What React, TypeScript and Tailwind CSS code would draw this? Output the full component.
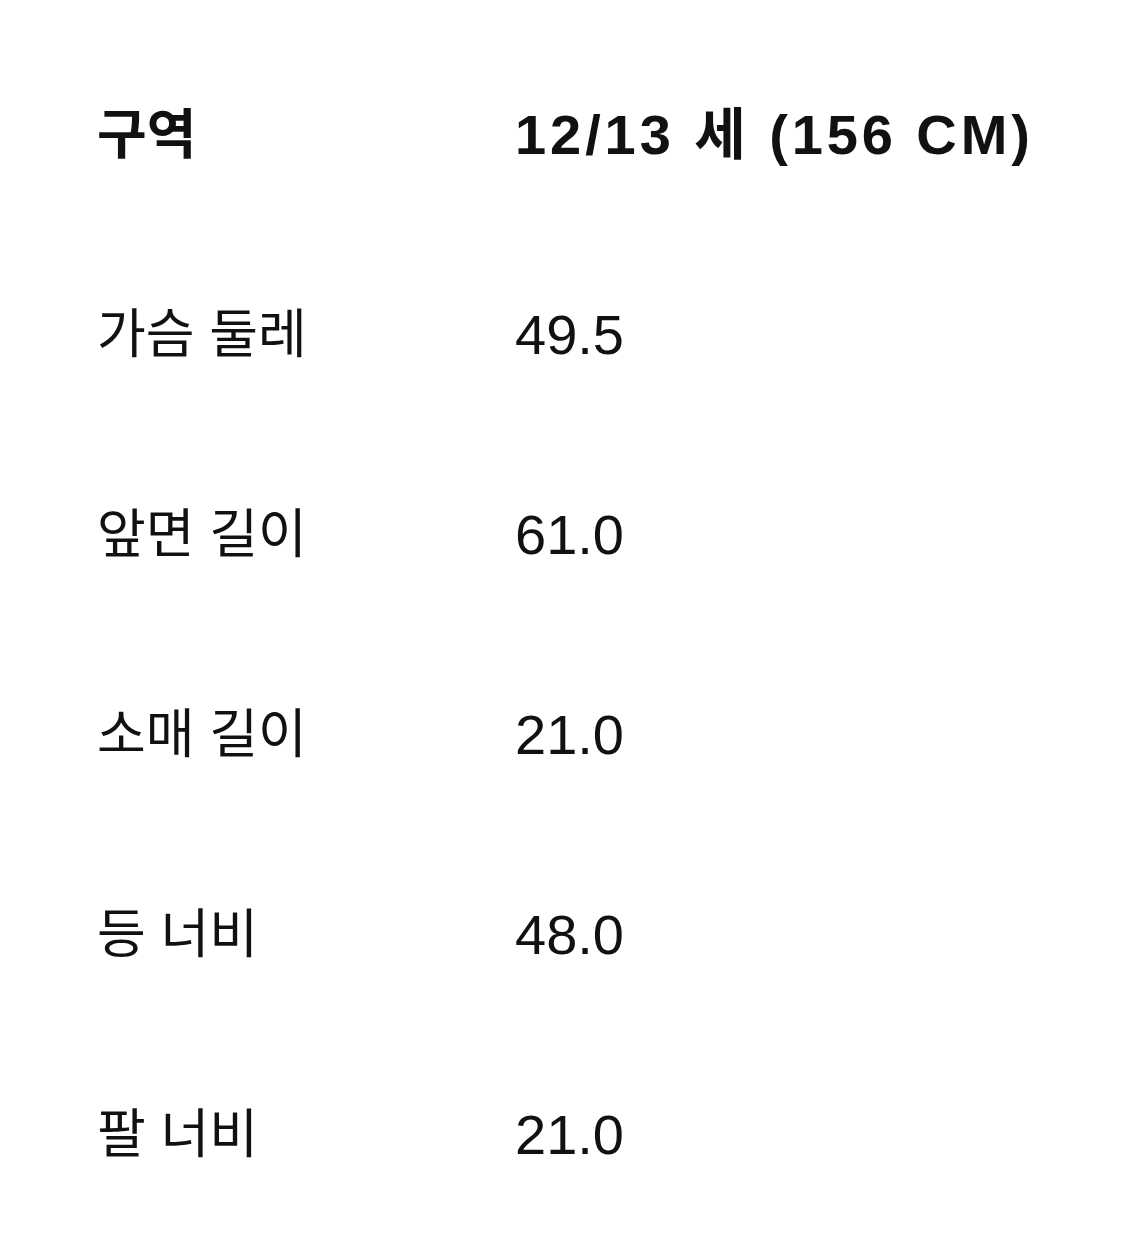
const rows: [string, string][] = [
  ["가슴 둘레", "49.5"],
  ["앞면 길이", "61.0"],
  ["소매 길이", "21.0"],
  ["등 너비", "48.0"],
  ["팔 너비", "21.0"],
];

export default function App() {
  return (
    <div className="min-h-[1241px] w-[1125px] bg-white pt-[35px] pl-[97px] text-[#111] font-['Liberation_Sans','Noto_Sans_CJK_KR',sans-serif]">
      <div className="grid grid-cols-[418px_1fr] auto-rows-[200px] items-center">
        <div className="text-[54px] font-bold">구역</div>
        <div className="text-[56px] font-bold tracking-[0.07em]">12/13 세 (156 CM)</div>
        {rows.map(([label, value]) => (
          <div key={label} className="contents">
            <div className="text-[53px]">{label}</div>
            <div className="text-[56px]">{value}</div>
          </div>
        ))}
      </div>
    </div>
  );
}
